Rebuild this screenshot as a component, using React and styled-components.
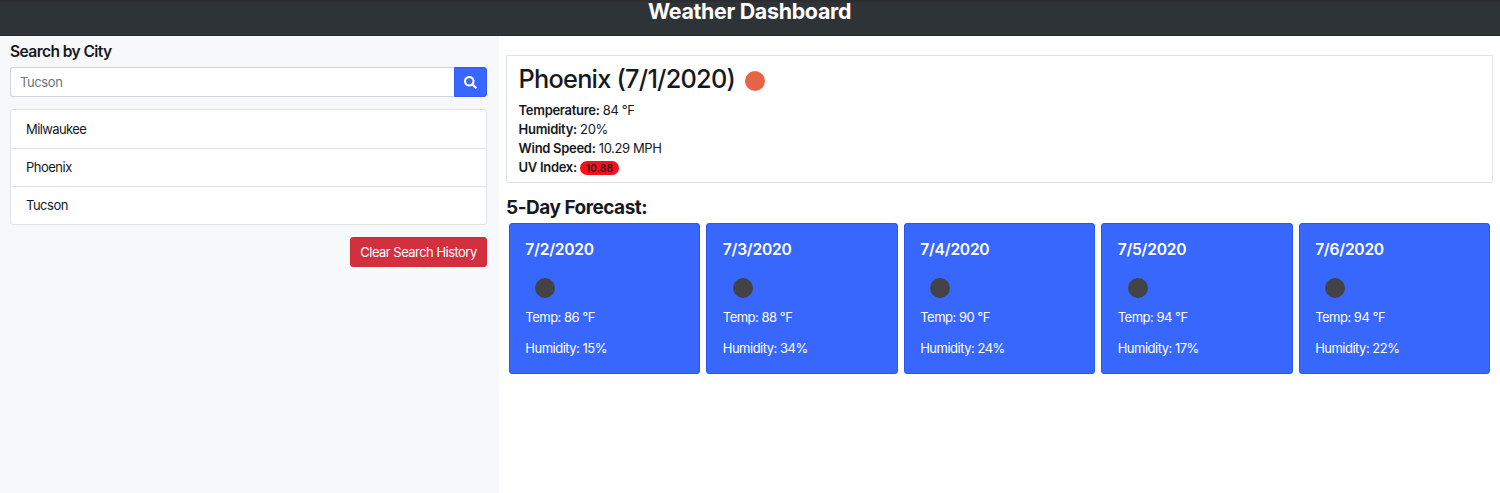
import React from "react";
import styled, { createGlobalStyle } from "styled-components";

const GlobalStyle = createGlobalStyle`
  *, *::before, *::after { box-sizing: border-box; }
  body {
    margin: 0;
    background: #fff;
    color: #16191d;
    font-family: Inter, "Liberation Sans", sans-serif;
    font-size: 13px;
    line-height: 19px;
    overflow: hidden;
  }
  h1, h2, h3, h4, p, ul { margin: 0; padding: 0; }
`;

const Page = styled.div`
  height: 493px;
  display: flex;
  flex-direction: column;
`;

const Header = styled.header`
  height: 36px;
  flex: none;
  background: #2e3337;
  border-top: 2px solid #2c2d2f;
  border-bottom: 1px solid #26282b;
  text-align: center;
`;

const SiteTitle = styled.h1`
  color: #fff;
  font-size: 21.4px;
  font-weight: 700;
  line-height: 19px;
  letter-spacing: -0.3px;
  padding-right: 1px;
`;

const Columns = styled.div`
  flex: 1;
  display: flex;
`;

const Sidebar = styled.aside`
  width: 499px;
  flex: none;
  background: #f7f8fa;
  padding: 6px 12px 0 10px;
  display: flex;
  flex-direction: column;
`;

const SearchLabel = styled.h3`
  font-size: 15.6px;
  font-weight: 600;
  line-height: 19px;
  margin-bottom: 6px;
  letter-spacing: -0.6px;
`;

const SearchRow = styled.form`
  display: flex;
  height: 30px;
  margin-bottom: 12px;
`;

const SearchInput = styled.input`
  flex: 1;
  min-width: 0;
  border: 1px solid #ced4da;
  border-right: 0;
  border-radius: 3px 0 0 3px;
  padding: 0 9px;
  background: #fff;
  font: inherit;
  letter-spacing: -0.4px;
  outline: none;
  &::placeholder { color: #6c757d; opacity: 1; }
`;

const SearchButton = styled.button`
  width: 33px;
  border: 1px solid #2f5cf5;
  border-radius: 0 3px 3px 0;
  background: #3867fd;
  color: #fff;
  padding: 0;
  display: flex;
  align-items: center;
  justify-content: center;
`;

const History = styled.ul`
  list-style: none;
  background: #fff;
  border: 1px solid #e0e2e4;
  border-radius: 3px;
  margin-bottom: 12px;
`;

const HistoryItem = styled.li`
  height: 38px;
  padding: 0 15px;
  line-height: 39px;
  letter-spacing: -0.6px;
  & + & {
    height: 38.2px;
    line-height: 37px;
    letter-spacing: -0.5px;
    border-top: 1px solid #e0e2e4;
  }
`;

const ClearButton = styled.button`
  align-self: flex-end;
  width: 137px;
  height: 30px;
  padding: 0;
  border: 1px solid #cd2c3b;
  border-radius: 3px;
  background: #d3303f;
  color: #fff;
  font: inherit;
  letter-spacing: -0.53px;
  white-space: nowrap;
`;

const Main = styled.main`
  flex: 1;
  padding: 19px 7px 0;
`;

const Current = styled.section`
  height: 128px;
  border: 1px solid #dfe3e6;
  padding: 7px 11.6px 0;
`;

const CityRow = styled.div`
  display: flex;
  align-items: center;
  height: 31px;
  margin-bottom: 7.3px;
`;

const CityTitle = styled.h2`
  font-size: 25.3px;
  font-weight: 500;
  line-height: 31px;
  letter-spacing: -0.76px;
  white-space: nowrap;
`;

const Sun = styled.span`
  width: 20px;
  height: 20px;
  margin: 4px 0 0 10px;
  border-radius: 50%;
  background: #e66445;
`;

const Stat = styled.p`
  height: 18.8px;
  line-height: 18.8px;
  letter-spacing: -0.4px;
  b { font-weight: 600; letter-spacing: -0.3px; }
`;

const UvBadge = styled.span`
  display: inline-block;
  height: 14px;
  width: 38.5px;
  border-radius: 7px;
  background: #fb0f1a;
  color: #3a1c1e;
  font-size: 10px;
  font-weight: 700;
  line-height: 14px;
  text-align: center;
  letter-spacing: 0.1px;
`;

const ForecastTitle = styled.h3`
  font-size: 19px;
  font-weight: 700;
  line-height: 24px;
  margin: 13px 0 3px;
  letter-spacing: -0.5px;
`;

const Forecast = styled.div`
  display: grid;
  grid-template-columns: repeat(5, 1fr);
  gap: 6.3px;
  padding: 0 3px;
`;

const DayCard = styled.article`
  height: 151px;
  border: 1px solid #2a56ef;
  border-radius: 3px;
  background: #3867fd;
  color: #fff;
  padding: 16px 15.3px 0;
`;

const DayDate = styled.h4`
  font-size: 15.6px;
  font-weight: 600;
  line-height: 20px;
  letter-spacing: -0.25px;
`;

const Moon = styled.span`
  display: block;
  width: 20px;
  height: 20px;
  margin: 18px 0 10px 10.2px;
  border-radius: 50%;
  background: #434345;
`;

const DayText = styled.p`
  height: 19px;
  margin: ${(p) => (p.$first ? "0" : "12px")} 0 0;
  letter-spacing: -0.5px;
`;

const cities = ["Milwaukee", "Phoenix", "Tucson"];
const days = [
  ["7/2/2020", 86, 15],
  ["7/3/2020", 88, 34],
  ["7/4/2020", 90, 24],
  ["7/5/2020", 94, 17],
  ["7/6/2020", 94, 22],
];

const SearchIcon = () => (
  <svg width="13" height="13" viewBox="0 0 512 512" fill="currentColor" aria-hidden="true">
    <path d="M505 442.7L405.3 343c-4.5-4.5-10.6-7-17-7H372c27.6-35.3 44-79.7 44-128C416 93.1 322.9 0 208 0S0 93.1 0 208s93.1 208 208 208c48.3 0 92.7-16.4 128-44v16.3c0 6.4 2.5 12.5 7 17l99.7 99.7c9.4 9.4 24.6 9.4 33.9 0l28.3-28.3c9.4-9.4 9.4-24.6.1-34zM208 336c-70.7 0-128-57.2-128-128 0-70.7 57.2-128 128-128 70.7 0 128 57.2 128 128 0 70.7-57.2 128-128 128z" />
  </svg>
);

export default function App() {
  return (
    <Page>
      <GlobalStyle />
      <Header>
        <SiteTitle>Weather Dashboard</SiteTitle>
      </Header>
      <Columns>
        <Sidebar>
          <SearchLabel>Search by City</SearchLabel>
          <SearchRow onSubmit={(e) => e.preventDefault()}>
            <SearchInput placeholder="Tucson" />
            <SearchButton aria-label="Search">
              <SearchIcon />
            </SearchButton>
          </SearchRow>
          <History>
            {cities.map((city) => (
              <HistoryItem key={city}>{city}</HistoryItem>
            ))}
          </History>
          <ClearButton>Clear Search History</ClearButton>
        </Sidebar>
        <Main>
          <Current>
            <CityRow>
              <CityTitle>Phoenix (7/1/2020)</CityTitle>
              <Sun />
            </CityRow>
            <Stat><b>Temperature:</b> 84 °F</Stat>
            <Stat><b>Humidity:</b> 20%</Stat>
            <Stat><b>Wind Speed:</b> 10.29 MPH</Stat>
            <Stat><b>UV Index:</b> <UvBadge>10.88</UvBadge></Stat>
          </Current>
          <ForecastTitle>5-Day Forecast:</ForecastTitle>
          <Forecast>
            {days.map(([date, temp, humidity]) => (
              <DayCard key={date}>
                <DayDate>{date}</DayDate>
                <Moon />
                <DayText $first>Temp: {temp} °F</DayText>
                <DayText>Humidity: {humidity}%</DayText>
              </DayCard>
            ))}
          </Forecast>
        </Main>
      </Columns>
    </Page>
  );
}
